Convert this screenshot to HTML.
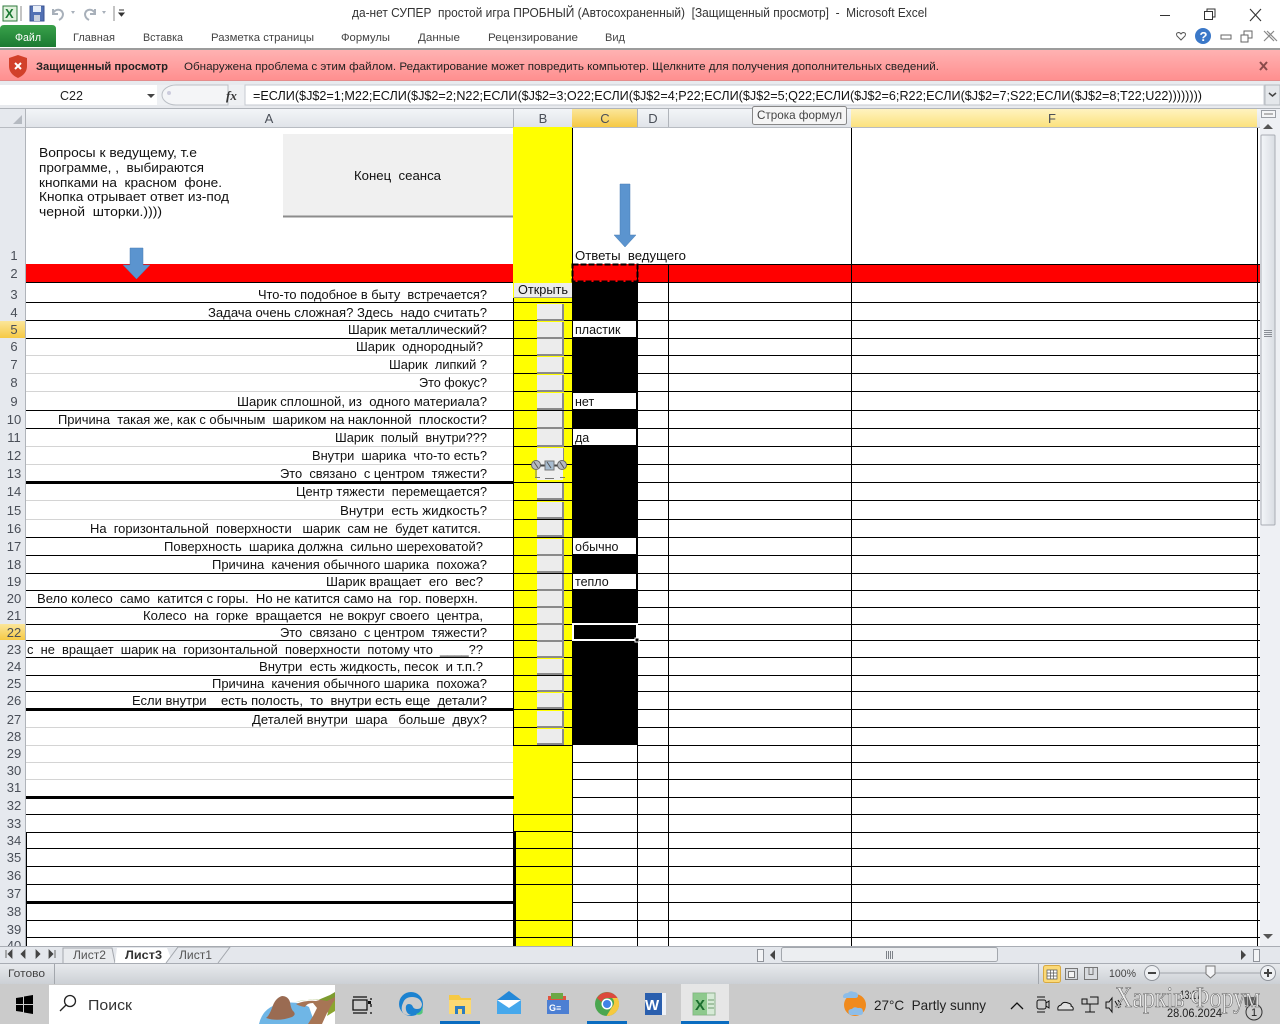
<!DOCTYPE html>
<html><head><meta charset="utf-8"><title>Excel</title>
<style>
html,body{margin:0;padding:0;background:#fff;width:1280px;height:1024px;overflow:hidden}
svg{position:absolute;left:0;top:0;display:block}
text{font-family:"Liberation Sans",Arial,sans-serif;white-space:pre;fill:#111}
.c{font-size:12.5px;fill:#111}
.h{font-size:13px;fill:#4a4f58;text-anchor:middle}
.u{font-size:11px;fill:#444}
</style></head><body>
<svg width="1280" height="1024" viewBox="0 0 1280 1024" xmlns="http://www.w3.org/2000/svg" xml:space="preserve">
<defs>
<linearGradient id="rb" x1="0" y1="0" x2="0" y2="1"><stop offset="0" stop-color="#ffb2b2"/><stop offset="1" stop-color="#ff8e8e"/></linearGradient>
<linearGradient id="gf" x1="0" y1="0" x2="0" y2="1"><stop offset="0" stop-color="#39a14a"/><stop offset="1" stop-color="#1b7a32"/></linearGradient>
<linearGradient id="hd" x1="0" y1="0" x2="0" y2="1"><stop offset="0" stop-color="#f3f5f8"/><stop offset="1" stop-color="#dfe3e8"/></linearGradient>
<linearGradient id="or" x1="0" y1="0" x2="0" y2="1"><stop offset="0" stop-color="#fbe69a"/><stop offset="1" stop-color="#f6c945"/></linearGradient>
<linearGradient id="yl" x1="0" y1="0" x2="0" y2="1"><stop offset="0" stop-color="#fff3c0"/><stop offset="1" stop-color="#fbe27e"/></linearGradient>
<linearGradient id="st" x1="0" y1="0" x2="0" y2="1"><stop offset="0" stop-color="#e9ebee"/><stop offset="1" stop-color="#ccd0d5"/></linearGradient>
<linearGradient id="sb" x1="0" y1="0" x2="1" y2="0"><stop offset="0" stop-color="#f4f6f9"/><stop offset="1" stop-color="#d9dde3"/></linearGradient>
</defs>

<!-- title bar -->
<rect width="1280" height="50" fill="#fff"/>
<rect x="3" y="6" width="14" height="15" fill="#dff0dc" stroke="#2f7a3c"/>
<text x="5" y="18" style="font-size:13px;font-weight:bold;fill:#1d7a34">X</text>
<line x1="21" y1="6" x2="21" y2="21" stroke="#888"/>
<rect x="30" y="6" width="14" height="15" fill="#5271b4" stroke="#3a5290"/>
<rect x="33" y="6" width="8" height="6" fill="#e8eef8"/><rect x="34" y="15" width="6" height="6" fill="#c8d0de"/>
<path d="M53 9v5h5M53 13c3-5 9-4 10 1 0 3-2 5-4 6" fill="none" stroke="#a8b0ba" stroke-width="2"/>
<path d="M71 11l2 3 2-3z" fill="#a8b0ba"/>
<path d="M95 9v5h-5M95 13c-3-5-9-4-10 1 0 3 2 5 4 6" fill="none" stroke="#a8b0ba" stroke-width="2"/>
<path d="M102 11l2 3 2-3z" fill="#a8b0ba"/>
<line x1="114" y1="6" x2="114" y2="21" stroke="#888"/>
<path d="M119 10h5M119 13l2.500 3 2.500-3z" fill="#333" stroke="#333"/>
<text x="352" y="17" textLength="575" lengthAdjust="spacingAndGlyphs" style="font-size:12.500px;fill:#333">да-нет СУПЕР  простой игра ПРОБНЫЙ (Автосохраненный)  [Защищенный просмотр]  -  Microsoft Excel</text>
<line x1="1160" y1="15.500" x2="1170" y2="15.500" stroke="#333"/>
<rect x="1204.500" y="11.500" width="8" height="8" fill="#fff" stroke="#333"/><path d="M1207 11.500v-2.500h8v8h-2.500" fill="none" stroke="#333"/>
<path d="M1250 9l11 12M1261 9l-11 12" stroke="#333" stroke-width="1.100"/>

<!-- ribbon tabs -->
<path d="M0 47V29q0-4 4-4h48q4 0 4 4v18z" fill="url(#gf)"/>
<text x="15" y="41" textLength="26" lengthAdjust="spacingAndGlyphs" style="font-size:11px;fill:#fff">Файл</text>
<g class="u">
<text class="u" x="73" y="41" textLength="42" lengthAdjust="spacingAndGlyphs">Главная</text>
<text class="u" x="143" y="41" textLength="40" lengthAdjust="spacingAndGlyphs">Вставка</text>
<text class="u" x="211" y="41" textLength="103" lengthAdjust="spacingAndGlyphs">Разметка страницы</text>
<text class="u" x="341" y="41" textLength="49" lengthAdjust="spacingAndGlyphs">Формулы</text>
<text class="u" x="418" y="41" textLength="42" lengthAdjust="spacingAndGlyphs">Данные</text>
<text class="u" x="488" y="41" textLength="90" lengthAdjust="spacingAndGlyphs">Рецензирование</text>
<text class="u" x="605" y="41" textLength="20" lengthAdjust="spacingAndGlyphs">Вид</text>
</g>
<path d="M1181 40l-4-4q-1.500-3 1.500-3.500 1.500 0 2.500 1.500 1-1.500 2.500-1.500 3 .5 1.500 3.500z" fill="none" stroke="#555"/>
<circle cx="1203" cy="36" r="8" fill="#3b78c8"/><text x="1199.500" y="41" style="font-size:13px;font-weight:bold;fill:#fff">?</text>
<rect x="1221" y="35" width="10" height="4" fill="none" stroke="#666"/>
<rect x="1241" y="35" width="7" height="7" fill="none" stroke="#666"/><path d="M1244 35v-4h8v7h-4" fill="none" stroke="#666"/>
<path d="M1264 31l10 10M1274 31l-10 10M1267 31l10 10" stroke="#888" stroke-width="1.200"/>
<rect x="0" y="48" width="1280" height="2" fill="#9c9c9c"/>

<!-- protected view bar -->
<rect x="0" y="50" width="1280" height="31" fill="url(#rb)"/>
<line x1="0" y1="81" x2="1280" y2="81" stroke="#c98a8a"/>
<path d="M9 58l9-3 9 3v8q0 8-9 12-9-4-9-12z" fill="#d2402a"/>
<path d="M15 63l6 6M21 63l-6 6" stroke="#fff" stroke-width="2"/>
<text x="36" y="70" textLength="132" lengthAdjust="spacingAndGlyphs" style="font-size:11px;font-weight:bold;fill:#222">Защищенный просмотр</text>
<text x="184" y="70" textLength="755" lengthAdjust="spacingAndGlyphs" style="font-size:11px;fill:#222">Обнаружена проблема с этим файлом. Редактирование может повредить компьютер. Щелкните для получения дополнительных сведений.</text>
<path d="M1260 62l7 8M1267 62l-7 8" stroke="#8a4a4a" stroke-width="2"/>

<!-- formula bar -->
<rect x="0" y="81" width="1280" height="28" fill="#e8eaee"/>
<rect x="0" y="85" width="157" height="20" fill="#fff"/>
<text x="60" y="100" style="font-size:12.500px;fill:#222">C22</text>
<path d="M147 94h8l-4 4z" fill="#444"/>
<rect x="157" y="85" width="88" height="20" fill="#eef0f3"/>
<path d="M176 85a14 10 0 0 0 0 20h52v-20z" fill="#f4f5f7" stroke="#bcc0c6"/>
<circle cx="169" cy="93" r="2" fill="#ccd"/>
<text x="226" y="100" style="font-size:13px;font-style:italic;font-family:'Liberation Serif',serif;fill:#333;font-weight:bold">fx</text>
<rect x="245" y="85" width="1019" height="20" fill="#fff" stroke="#c6cad0"/>
<text x="253" y="100" textLength="949" lengthAdjust="spacingAndGlyphs" style="font-size:12.500px;fill:#111">=ЕСЛИ($J$2=1;M22;ЕСЛИ($J$2=2;N22;ЕСЛИ($J$2=3;O22;ЕСЛИ($J$2=4;P22;ЕСЛИ($J$2=5;Q22;ЕСЛИ($J$2=6;R22;ЕСЛИ($J$2=7;S22;ЕСЛИ($J$2=8;T22;U22))))))))</text>
<rect x="1265" y="85" width="15" height="20" fill="#e4e7eb" stroke="#b5b9bf"/>
<path d="M1269 93l3.500 3 3.500-3" fill="none" stroke="#444" stroke-width="1.500"/>

<!-- headers -->
<rect x="0" y="109" width="1280" height="19" fill="url(#hd)"/>
<rect x="0" y="109" width="26" height="837" fill="#e6e9ee"/>
<line x1="0" y1="108.500" x2="1280" y2="108.500" stroke="#b0b4ba"/>
<line x1="0" y1="127.500" x2="1260" y2="127.500" stroke="#b8bcc2"/>
<path d="M22 124V115l-9 9z" fill="#b5bac1"/>
<line x1="25.500" y1="109" x2="25.500" y2="946" stroke="#b0b4ba"/>
<rect x="572" y="109" width="66" height="18" fill="url(#or)"/>
<rect x="851" y="109" width="406" height="18" fill="url(#yl)"/>
<rect x="513" y="127" width="59" height="1" fill="#ffff00"/>
<path d="M513.500 109v18M637.500 109v18M668.500 109v18" stroke="#b0b4ba"/>
<text class="h" x="269" y="123">A</text><text class="h" x="543" y="123">B</text><text class="h" x="605" y="123">C</text><text class="h" x="653" y="123">D</text><text class="h" x="1052" y="123">F</text>

<!-- grid base -->
<rect x="26" y="128" width="1234" height="818" fill="#fff"/>
<rect x="26" y="264" width="1234" height="18" fill="#ff0000"/>
<rect x="513" y="128" width="59" height="818" fill="#ffff00"/>
<rect x="572" y="282" width="65" height="463" fill="#000"/>

<!-- horizontal lines A -->
<g stroke="#000" stroke-width="1">
<path d="M637 264.500H1260M26 282.500H513M26 302.500H513M26 320.500H513M26 338.500H513M26 410.500H513M26 428.500H513M26 537.500H513M26 555.500H513M26 573.500H513M26 590.500H513M26 607.500H513M26 624.500H513M26 640.500H513M26 657.500H513M26 675.500H513M26 691.500H513M26 814.500H513M26 832.500H513M26 848.500H513M26 866.500H513M26 884.500H513M26 920.500H513M26 937.500H513"/>
</g>
<path d="M26 355.500H513M26 373.500H513M26 391.500H513M26 446.500H513M26 464.500H513M26 500.500H513M26 519.500H513M26 727.500H513M26 745.500H513M26 762.500H513M26 779.500H513" stroke="#d4d4d4"/>
<rect x="26" y="481" width="488" height="3" fill="#000"/>
<rect x="26" y="708" width="488" height="3" fill="#000"/>
<rect x="26" y="796" width="488" height="3" fill="#000"/>
<rect x="26" y="901" width="488" height="3" fill="#000"/>
<!-- lines B -->
<path d="M513 302.500H572M513 320.500H572M513 338.500H572M513 355.500H572M513 373.500H572M513 391.500H572M513 410.500H572M513 428.500H572M513 446.500H572M513 464.500H572M513 482.500H572M513 500.500H572M513 519.500H572M513 537.500H572M513 555.500H572M513 573.500H572M513 590.500H572M513 607.500H572M513 624.500H572M513 640.500H572M513 657.500H572M513 675.500H572M513 691.500H572M513 709.500H572M513 727.500H572M513 745.500H572M513 814.500H572M513 831.500H572M513 848.500H572M513 866.500H572M513 884.500H572M513 920.500H572M513 937.500H572" stroke="#000"/>
<!-- lines right of C -->
<path d="M637 282.500H1260M637 302.500H1260M637 320.500H1260M637 338.500H1260M637 355.500H1260M637 373.500H1260M637 391.500H1260M637 410.500H1260M637 428.500H1260M637 446.500H1260M637 464.500H1260M637 482.500H1260M637 500.500H1260M637 519.500H1260M637 537.500H1260M637 555.500H1260M637 573.500H1260M637 590.500H1260M637 607.500H1260M637 624.500H1260M637 640.500H1260M637 657.500H1260M637 675.500H1260M637 691.500H1260M637 709.500H1260M637 727.500H1260M637 745.500H1260M572 762.500H1260M572 779.500H1260M572 797.500H1260M572 814.500H1260M572 832.500H1260M572 848.500H1260M572 866.500H1260M572 884.500H1260M572 902.500H1260M572 920.500H1260M572 937.500H1260" stroke="#000"/>
<!-- vertical -->
<path d="M572.500 128V946M637.500 264V946M668.500 264V946M851.500 128V946M1257.500 128V946M513.500 298V745M513.500 814V832" stroke="#000"/>
<rect x="513" y="832" width="3" height="114" fill="#000"/>
<path d="M26.500 832V946" stroke="#000"/>

<!-- white answer cells -->
<rect x="573" y="321" width="63" height="16" fill="#fff"/>
<rect x="573" y="393" width="63" height="16" fill="#fff"/>
<rect x="573" y="429" width="63" height="16" fill="#fff"/>
<rect x="573" y="538" width="63" height="16" fill="#fff"/>
<rect x="573" y="574" width="63" height="15" fill="#fff"/>
<text class="c" x="575" y="334">пластик</text>
<text class="c" x="575" y="406">нет</text>
<text class="c" x="575" y="442">да</text>
<text class="c" x="575" y="551">обычно</text>
<text class="c" x="575" y="586">тепло</text>
<text class="c" x="575" y="260" textLength="111" lengthAdjust="spacingAndGlyphs">Ответы  ведущего</text>

<!-- C2 marching ants -->
<rect x="572.500" y="264.500" width="65" height="17" fill="none" stroke="#000" stroke-width="2" stroke-dasharray="6 2"/>
<!-- C22 selection -->
<rect x="573" y="624" width="64" height="16" fill="none" stroke="#fff" stroke-width="2"/>
<rect x="635" y="638" width="4" height="4" fill="#000" stroke="#fff"/>

<!-- Buttons in B -->
<g fill="#ececec">
<rect x="537" y="304" width="25" height="15"/><rect x="537" y="322" width="25" height="15"/><rect x="537" y="339" width="25" height="15"/><rect x="537" y="357" width="25" height="15"/><rect x="537" y="375" width="25" height="15"/><rect x="537" y="393" width="25" height="15"/><rect x="537" y="411" width="25" height="16"/><rect x="537" y="429" width="25" height="16"/><rect x="537" y="448" width="25" height="15"/><rect x="537" y="483" width="25" height="15"/><rect x="537" y="502" width="25" height="15"/><rect x="537" y="520" width="25" height="15"/><rect x="537" y="539" width="25" height="15"/><rect x="537" y="556" width="25" height="15"/><rect x="537" y="574" width="25" height="15"/><rect x="537" y="591" width="25" height="15"/><rect x="537" y="608" width="25" height="15"/><rect x="537" y="625" width="25" height="15"/><rect x="537" y="642" width="25" height="14"/><rect x="537" y="659" width="25" height="14"/><rect x="537" y="676" width="25" height="14"/><rect x="537" y="693" width="25" height="14"/><rect x="537" y="711" width="25" height="15"/><rect x="537" y="729" width="25" height="14"/>
</g>
<path d="M537 320H563V304M537 338H563V322M537 355H563V339M537 373H563V357M537 391H563V375M537 409H563V393M537 428H563V411M537 446H563V429M537 464H563V448M537 499H563V483M537 518H563V502M537 536H563V520M537 555H563V539M537 572H563V556M537 590H563V574M537 607H563V591M537 624H563V608M537 641H563V625M537 657H563V642M537 674H563V659M537 691H563V676M537 708H563V693M537 727H563V711M537 744H563V729" fill="none" stroke="#8a8a8a" stroke-width="2"/>
<!-- Открыть -->
<rect x="514" y="283" width="58" height="14" fill="#ececec"/>
<path d="M514 297.500H572" stroke="#999"/>
<text x="518" y="294" textLength="50" lengthAdjust="spacingAndGlyphs" style="font-size:12.500px;fill:#111">Открыть</text>
<!-- Selected shape row 13 -->
<rect x="537" y="448" width="26" height="32" fill="#efefef"/>
<path d="M537 465.500H562" stroke="#444" stroke-width="2"/>
<rect x="545" y="461" width="9" height="9" fill="#a8bcd0" stroke="#777"/>
<circle cx="536" cy="465" r="4.500" fill="#b5b9bf" stroke="#666"/><circle cx="562" cy="465" r="4.500" fill="#b5b9bf" stroke="#666"/>
<path d="M534 462l4 6M547 462l4 6M560 462l4 6" stroke="#555"/>
<path d="M536 470v8M535 477.500h5M560 477.500h5M545 478.500h9" stroke="#777"/>

<!-- Row 1 content -->
<rect x="283" y="134" width="230" height="82" fill="#f0f0f0"/>
<path d="M283 216.500H513" stroke="#8c8c8c" stroke-width="2"/>
<text x="354" y="180" textLength="87" lengthAdjust="spacingAndGlyphs" style="font-size:12.500px;fill:#111">Конец  сеанса</text>
<g style="font-size:12.500px">
<text x="39" y="157" textLength="158" lengthAdjust="spacingAndGlyphs" style="font-size:12.500px">Вопросы к ведущему, т.е</text>
<text x="39" y="172" textLength="165" lengthAdjust="spacingAndGlyphs" style="font-size:12.500px">программе, ,  выбираются</text>
<text x="39" y="187" textLength="183" lengthAdjust="spacingAndGlyphs" style="font-size:12.500px">кнопками на  красном  фоне.</text>
<text x="39" y="201" textLength="190" lengthAdjust="spacingAndGlyphs" style="font-size:12.500px">Кнопка отрывает ответ из-под</text>
<text x="39" y="216" textLength="123" lengthAdjust="spacingAndGlyphs" style="font-size:12.500px">черной  шторки.))))</text>
</g>
<path d="M130 248h13v17h7l-13.500 14-13.500-14h7z" fill="#5b94cf" stroke="#4a7db3" stroke-width=".5"/>
<path d="M620 184h10v51h6l-11 12-11-12h6z" fill="#5b94cf" stroke="#4a7db3" stroke-width=".5"/>

<!-- Column A questions -->
<g>
<text class="c" x="258" y="299" textLength="229" lengthAdjust="spacingAndGlyphs">Что-то подобное в быту  встречается?</text>
<text class="c" x="208" y="317" textLength="279" lengthAdjust="spacingAndGlyphs">Задача очень сложная? Здесь  надо считать?</text>
<text class="c" x="348" y="334" textLength="139" lengthAdjust="spacingAndGlyphs">Шарик металлический?</text>
<text class="c" x="356" y="351" textLength="127" lengthAdjust="spacingAndGlyphs">Шарик  однородный?</text>
<text class="c" x="389" y="369" textLength="98" lengthAdjust="spacingAndGlyphs">Шарик  липкий ?</text>
<text class="c" x="419" y="387" textLength="68" lengthAdjust="spacingAndGlyphs">Это фокус?</text>
<text class="c" x="237" y="406" textLength="250" lengthAdjust="spacingAndGlyphs">Шарик сплошной, из  одного материала?</text>
<text class="c" x="58" y="424" textLength="429" lengthAdjust="spacingAndGlyphs">Причина  такая же, как с обычным  шариком на наклонной  плоскости?</text>
<text class="c" x="335" y="442" textLength="152" lengthAdjust="spacingAndGlyphs">Шарик  полый  внутри???</text>
<text class="c" x="312" y="460" textLength="175" lengthAdjust="spacingAndGlyphs">Внутри  шарика  что-то есть?</text>
<text class="c" x="280" y="478" textLength="207" lengthAdjust="spacingAndGlyphs">Это  связано  с центром  тяжести?</text>
<text class="c" x="296" y="496" textLength="191" lengthAdjust="spacingAndGlyphs">Центр тяжести  перемещается?</text>
<text class="c" x="340" y="515" textLength="147" lengthAdjust="spacingAndGlyphs">Внутри  есть жидкость?</text>
<text class="c" x="90" y="533" textLength="391" lengthAdjust="spacingAndGlyphs">На  горизонтальной  поверхности   шарик  сам не  будет катится.</text>
<text class="c" x="164" y="551" textLength="319" lengthAdjust="spacingAndGlyphs">Поверхность  шарика должна  сильно шереховатой?</text>
<text class="c" x="212" y="569" textLength="275" lengthAdjust="spacingAndGlyphs">Причина  качения обычного шарика  похожа?</text>
<text class="c" x="326" y="586" textLength="157" lengthAdjust="spacingAndGlyphs">Шарик вращает  его  вес?</text>
<text class="c" x="37" y="603" textLength="441" lengthAdjust="spacingAndGlyphs">Вело колесо  само  катится с горы.  Но не катится само на  гор. поверхн.</text>
<text class="c" x="143" y="620" textLength="340" lengthAdjust="spacingAndGlyphs">Колесо  на  горке  вращается  не вокруг своего  центра,</text>
<text class="c" x="280" y="637" textLength="207" lengthAdjust="spacingAndGlyphs">Это  связано  с центром  тяжести?</text>
<text class="c" x="27" y="654" textLength="456" lengthAdjust="spacingAndGlyphs">с  не  вращает  шарик на  горизонтальной  поверхности  потому что  ____??</text>
<text class="c" x="259" y="671" textLength="224" lengthAdjust="spacingAndGlyphs">Внутри  есть жидкость, песок  и т.п.?</text>
<text class="c" x="212" y="688" textLength="275" lengthAdjust="spacingAndGlyphs">Причина  качения обычного шарика  похожа?</text>
<text class="c" x="132" y="705" textLength="355" lengthAdjust="spacingAndGlyphs">Если внутри    есть полость,  то  внутри есть еще  детали?</text>
<text class="c" x="252" y="724" textLength="235" lengthAdjust="spacingAndGlyphs">Деталей внутри  шара   больше  двух?</text>
</g>

<!-- Row headers -->
<rect x="0" y="321" width="25" height="17" fill="url(#or)"/>
<rect x="0" y="624" width="25" height="16" fill="url(#or)"/>
<g>
<text class="h" x="14" y="260">1</text><text class="h" x="14" y="278">2</text><text class="h" x="14" y="299">3</text><text class="h" x="14" y="317">4</text><text class="h" x="14" y="334">5</text><text class="h" x="14" y="351">6</text><text class="h" x="14" y="369">7</text><text class="h" x="14" y="387">8</text><text class="h" x="14" y="406">9</text><text class="h" x="14" y="424">10</text><text class="h" x="14" y="442">11</text><text class="h" x="14" y="460">12</text><text class="h" x="14" y="478">13</text><text class="h" x="14" y="496">14</text><text class="h" x="14" y="515">15</text><text class="h" x="14" y="533">16</text><text class="h" x="14" y="551">17</text><text class="h" x="14" y="569">18</text><text class="h" x="14" y="586">19</text><text class="h" x="14" y="603">20</text><text class="h" x="14" y="620">21</text><text class="h" x="14" y="637">22</text><text class="h" x="14" y="654">23</text><text class="h" x="14" y="671">24</text><text class="h" x="14" y="688">25</text><text class="h" x="14" y="705">26</text><text class="h" x="14" y="724">27</text><text class="h" x="14" y="741">28</text><text class="h" x="14" y="758">29</text><text class="h" x="14" y="775">30</text><text class="h" x="14" y="792">31</text><text class="h" x="14" y="810">32</text><text class="h" x="14" y="828">33</text><text class="h" x="14" y="845">34</text><text class="h" x="14" y="862">35</text><text class="h" x="14" y="880">36</text><text class="h" x="14" y="898">37</text><text class="h" x="14" y="916">38</text><text class="h" x="14" y="934">39</text><text class="h" x="14" y="950">40</text>
</g>

<!-- tooltip -->
<rect x="752.500" y="106.500" width="94" height="18" rx="2" fill="#f5f5f5" stroke="#888"/>
<text x="757" y="119" textLength="85" lengthAdjust="spacingAndGlyphs" style="font-size:12px;fill:#444">Строка формул</text>

<!-- vertical scrollbar -->
<rect x="1260" y="109" width="20" height="837" fill="#eef0f4"/>
<rect x="1261.500" y="110.500" width="14" height="7" fill="#f4f5f7" stroke="#9a9ea5"/>
<line x1="1264" y1="114" x2="1273" y2="114" stroke="#777"/>
<path d="M1263 129l5-5 5 5z" fill="#555"/>
<rect x="1261" y="135" width="14" height="390" rx="1" fill="url(#sb)" stroke="#a9adb4"/>
<path d="M1264 330.500h8M1264 332.500h8M1264 334.500h8M1264 336.500h8" stroke="#8a8e95"/>
<path d="M1263 934l5 5 5-5z" fill="#555"/>

<!-- sheet tabs bar -->
<rect x="0" y="946" width="1280" height="17" fill="#e4e7ec"/>
<line x1="0" y1="946.500" x2="1280" y2="946.500" stroke="#a9adb4"/>
<path d="M6 950v8M12 950l-4 4 4 4zM25 950l-4 4 4 4zM36 950l4 4-4 4zM49 950l4 4-4 4zM55 950v8" fill="#444" stroke="#444" stroke-width=".8"/>
<path d="M63 963V948h49l3 15" fill="#e9ebee" stroke="#a3a7ad"/>
<path d="M115 963l2-15h50l6 15z" fill="#fff" stroke="none"/>
<path d="M166 963l12-16h52l-12 16" fill="#e4e7ec" stroke="#a3a7ad"/>
<text x="73" y="959" textLength="33" lengthAdjust="spacingAndGlyphs" style="font-size:12px;fill:#555">Лист2</text>
<text x="125" y="959" textLength="37" lengthAdjust="spacingAndGlyphs" style="font-size:12px;font-weight:bold;fill:#333">Лист3</text>
<text x="179" y="959" textLength="33" lengthAdjust="spacingAndGlyphs" style="font-size:12px;fill:#555">Лист1</text>
<rect x="757.500" y="949.500" width="6" height="12" fill="#f3f4f6" stroke="#8f939a"/>
<path d="M775 950l-5 5 5 5z" fill="#444"/>
<rect x="781.500" y="947.500" width="216" height="14" rx="2" fill="#eceef1" stroke="#a3a7ad"/>
<path d="M886.500 951v8M888.500 951v8M890.500 951v8M892.500 951v8" stroke="#7d8188"/>
<path d="M1241 950l5 5-5 5z" fill="#444"/>
<rect x="1253.500" y="949.500" width="6" height="12" fill="#f3f4f6" stroke="#8f939a"/>

<!-- status bar -->
<rect x="0" y="963" width="1280" height="21" fill="url(#st)"/>
<line x1="0" y1="963.500" x2="1280" y2="963.500" stroke="#a9adb4"/>
<text x="8" y="977" textLength="37" lengthAdjust="spacingAndGlyphs" style="font-size:11px;fill:#444">Готово</text>
<line x1="54.500" y1="964" x2="54.500" y2="984" stroke="#a3a7ad"/>
<line x1="1038.500" y1="964" x2="1038.500" y2="984" stroke="#a3a7ad"/>
<rect x="1043.500" y="965.500" width="17" height="17" rx="2" fill="#fbd977" stroke="#d8a940"/>
<path d="M1047 970h10v9h-10zM1047 973h10M1047 976h10M1050.500 970v9M1053.500 970v9" fill="#fff" stroke="#555" stroke-width=".7"/>
<rect x="1065.500" y="968.500" width="12" height="11" fill="#d8dbdf" stroke="#777"/><rect x="1068.500" y="971.500" width="6" height="6" fill="#f4f4f4" stroke="#777"/>
<path d="M1084.500 967.500h13v12h-13zM1089 967.500v7h4v-7" fill="#d8dbdf" stroke="#777"/>
<text x="1109" y="977" textLength="27" lengthAdjust="spacingAndGlyphs" style="font-size:11px;fill:#444">100%</text>
<line x1="1160" y1="973" x2="1260" y2="973" stroke="#a0a4aa"/>
<circle cx="1152" cy="973" r="7.500" fill="#eef0f3" stroke="#8f939a"/><path d="M1148 973h8" stroke="#444" stroke-width="2"/>
<circle cx="1268" cy="973" r="7.500" fill="#eef0f3" stroke="#8f939a"/><path d="M1264 973h8M1268 969v8" stroke="#444" stroke-width="2"/>
<path d="M1206 966h9v8l-4.500 4-4.500-4z" fill="#f4f5f7" stroke="#777"/>

<!-- taskbar -->
<rect x="0" y="984" width="1280" height="40" fill="#cbcbcb"/>
<path d="M16 998l7-1v7h-7zM24 996.500l9-1.500v9h-9zM16 1005h7v7l-7-1zM24 1005h9v9l-9-1.500z" fill="#000"/>
<rect x="49" y="985" width="286" height="39" fill="#fff"/>
<circle cx="70" cy="1001" r="5.500" fill="none" stroke="#222" stroke-width="1.300"/><path d="M66 1005l-6 6" stroke="#222" stroke-width="1.300"/>
<text x="88" y="1010" textLength="44" lengthAdjust="spacingAndGlyphs" style="font-size:15px;fill:#333">Поиск</text>
<!-- search box island artwork -->
<path d="M259 1024q4-18 24-21 16-2 26 4l6 17z" fill="#6fb6e6"/>
<path d="M266 1018q3-2 6-10 3-10 10-12 6 0 8 6 1 8 4 10 2 3-2 5-14 5-26 1z" fill="#9a6b52"/>
<path d="M296 1004q10-4 20-3l14-4 5-3v12l-8 7-5 11h-14l5-8 4-8-4-5q-6 0-8 4-6-1-9-3z" fill="#a77555"/>
<path d="M296 1002q12-3 22-2l12-5 5-3v5l-8 4q-8-2-16-1-10 0-15 2z" fill="#7d9b2f"/>
<path d="M335 1000v11l-8 5q2-9 8-16z" fill="#8ba52f"/>
<path d="M353 997h14M353 1000h14v10h-14zM353 1013h14M371 998v2M371 1004v3M371 1012v2" fill="none" stroke="#111" stroke-width="1.300"/>
<rect x="368" y="1001" width="3" height="3" fill="#111"/>
<!-- edge -->
<circle cx="411" cy="1004" r="12" fill="#1c82d0"/>
<path d="M403 1003q2-6 9-6 8 0 10 7 0 5-5 5-3 0-4-2-1-3-4-3-4 0-3 6 1 4 5 5-7 1-9-4-1-4 1-8z" fill="#cbcbcb"/>
<path d="M416 1014q6-2 7-8l-.5 7q-3 3-6.500 1z" fill="#4fc67a"/>
<!-- folder -->
<path d="M449 995h10l2 3h10v16h-22z" fill="#f6c944"/><path d="M449 1000h22v14h-22z" fill="#fbd973"/>
<rect x="455" y="1006" width="10" height="8" fill="#2d7cc0"/><rect x="458" y="1009" width="4" height="5" fill="#fbd973"/>
<rect x="440" y="1021" width="40" height="3" fill="#0a6cc0"/>
<!-- mail -->
<path d="M497 1000l12-9 12 9v14h-24z" fill="#2488d8"/>
<path d="M497 1000l12 8 12-8v14h-24z" fill="#46a8ec"/><path d="M497 1000l12 8 12-8" fill="#fff"/>
<!-- gmail-like -->
<rect x="548" y="996" width="18" height="6" fill="#e0533f"/><rect x="551" y="993" width="12" height="6" fill="#6ca845"/>
<rect x="547" y="1000" width="22" height="14" fill="#4c7fd3"/>
<text x="549" y="1011" style="font-size:9px;font-weight:bold;fill:#fff">G≡</text>
<!-- chrome -->
<circle cx="607" cy="1004" r="12" fill="#4aa64f"/>
<path d="M597 998a12 12 0 0 1 20.500 0H607a6 6 0 0 0-5.500 4z" fill="#dc4a3d"/>
<path d="M617.500 998a12 12 0 0 1-11 18l5.500-9a6 6 0 0 0 0-9z" fill="#f6c93e"/>
<circle cx="607" cy="1004" r="5.500" fill="#fff"/><circle cx="607" cy="1004" r="4" fill="#3f83e6"/>
<rect x="587" y="1021" width="40" height="3" fill="#0a6cc0"/>
<!-- word -->
<rect x="645" y="993" width="21" height="22" fill="#f0f3f8"/><rect x="645" y="993" width="17" height="22" fill="#2a5fae"/>
<text x="645" y="1010" style="font-size:15px;font-weight:bold;fill:#fff">W</text>
<!-- excel -->
<rect x="681" y="984" width="48" height="40" fill="#e6e6e6"/>
<rect x="693" y="993" width="22" height="22" fill="#d6ead6" stroke="#8fb38f"/>
<rect x="693" y="993" width="14" height="22" fill="#7cc07a" opacity=".8"/>
<text x="695" y="1010" style="font-size:15px;font-weight:bold;fill:#1a6e2e">X</text>
<path d="M708 1000h6M708 1004h6M708 1008h6" stroke="#6f9a6f"/>
<rect x="681" y="1021" width="48" height="3" fill="#0a6cc0"/>
<!-- weather -->
<circle cx="855" cy="1005" r="11" fill="#f08a1d"/>
<path d="M843 997q0-4 5-4 2-3 6-1 4 0 4 4 0 2-3 2h-10q-2 0-2-1z" fill="#8dbde8"/>
<path d="M849 1014q-2-5 3-5 2-3 6-1 5-1 5 4 0 3-3 3h-9z" fill="#8dbde8"/>
<text x="874" y="1010" textLength="112" lengthAdjust="spacingAndGlyphs" style="font-size:14px;fill:#222">27°C  Partly sunny</text>
<!-- tray -->
<path d="M1011 1009l6-6 6 6" fill="none" stroke="#111" stroke-width="1.300"/>
<rect x="1037" y="1000" width="9" height="9" rx="2" fill="none" stroke="#111"/><path d="M1046 1003l3-2v7l-3-2M1037 997h8M1037 1012h8" fill="none" stroke="#111"/>
<path d="M1058 1010q-1-4 3-5 2-4 7-2 4 1 3 3 3 1 2 4z" fill="#e0e0e0" stroke="#111"/>
<path d="M1082 999h5v5h-5zM1084 1004h14v-7h-8M1090 1004v8M1085 1012h10" fill="none" stroke="#111"/>
<path d="M1106 1002h3l3-4v14l-3-4h-3zM1115 1001l4 7M1118 1000l3 5" fill="none" stroke="#111"/>
<text x="1180" y="999" textLength="21" lengthAdjust="spacingAndGlyphs" style="font-size:12px;fill:#222">13:17</text>
<text x="1167" y="1017" textLength="55" lengthAdjust="spacingAndGlyphs" style="font-size:12px;fill:#222">28.06.2024</text>
<circle cx="1254" cy="1012" r="8" fill="none" stroke="#333"/><text x="1251" y="1016" style="font-size:11px;fill:#222">1</text>
<path d="M1244 997h14l-3 8h-10z" fill="#333" opacity=".7"/>
<!-- watermark -->
<text x="1115" y="1007" textLength="145" lengthAdjust="spacingAndGlyphs" style="font-size:30px;font-family:'Liberation Serif',serif;fill:#f2f2f2;stroke:#555;stroke-width:.6;opacity:.9">Харків Форум</text>
</svg>
</body></html>
